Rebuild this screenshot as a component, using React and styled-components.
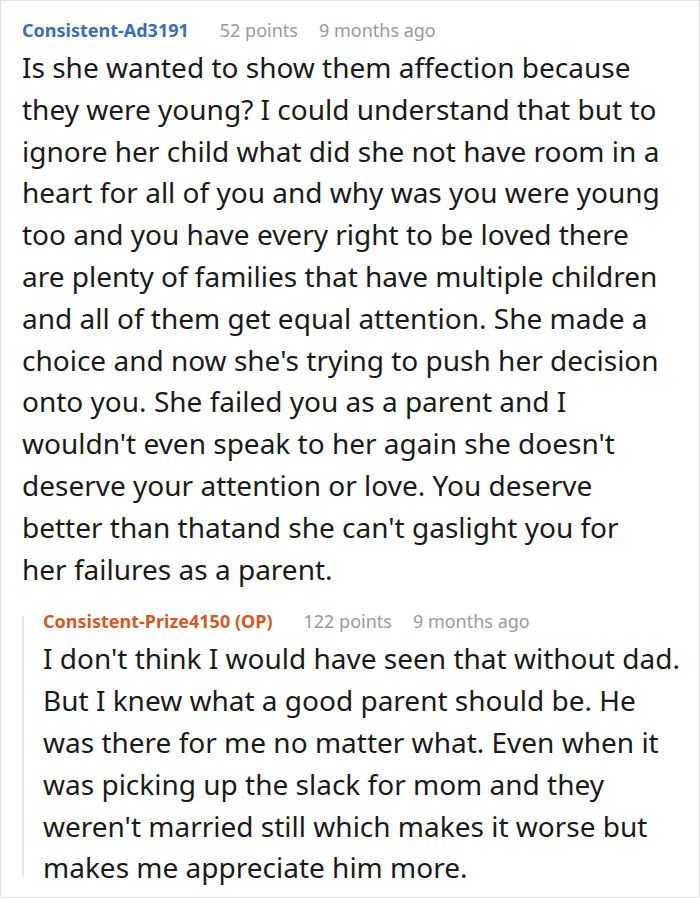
import React from 'react'
import styled, { createGlobalStyle } from 'styled-components'

const Global = createGlobalStyle`
  html, body { margin: 0; padding: 0; background: #fff; }
  body { font-family: "Noto Sans", "Open Sans", sans-serif; }
`

const Card = styled.section`
  box-sizing: border-box;
  width: 700px;
  height: 898px;
  border: 1px solid #e2e2e2;
  padding: 17px 14px 0 21px;
  overflow: hidden;
`

const Meta = styled.div`
  display: flex;
  align-items: baseline;
  font-size: 18px;
  line-height: 24px;
  color: #9a9a9a;
  white-space: nowrap;
`

const Author = styled.span`
  font-weight: 700;
  color: ${p => (p.$op ? '#d45a24' : '#3a6db5')};
  margin-right: 31px;
`

const Points = styled.span`
  margin-right: 21px;
`

const Body = styled.p`
  margin: 5px ${p => p.$inset}px 0 0;
  font-size: 28px;
  line-height: 41.8px;
  color: #1a1a1a;
`

// thin grey thread line on the left of a reply
const Reply = styled.div`
  margin-top: 19px;
  padding: 0 0 0 21px;
  background: linear-gradient(#e8e8e8, #e8e8e8) no-repeat 0 7px / 2px calc(100% - 19px);
`

const Comment = ({ author, points, time, op, inset = 0, children }) => (
  <>
    <Meta>
      <Author $op={op}>{author}</Author>
      <Points>{points} points</Points>
      <span>{time}</span>
    </Meta>
    <Body $inset={inset}>{children}</Body>
  </>
)

export default function App() {
  return (
    <>
      <Global />
      <Card>
        <Comment author="Consistent-Ad3191" points={52} time="9 months ago" inset={24}>
          Is she wanted to show them affection because they were young? I could understand that but to
          ignore her child what did she not have room in a heart for all of you and why was you were young
          too and you have every right to be loved there are plenty of families that have multiple children
          and all of them get equal attention. She made a choice and now she's trying to push her decision
          onto you. She failed you as a parent and I wouldn't even speak to her again she doesn't deserve
          your attention or love. You deserve better than thatand she can't gaslight you for her failures
          as a parent.
        </Comment>
        <Reply>
          <Comment author="Consistent-Prize4150 (OP)" points={122} time="9 months ago" op>
            I don't think I would have seen that without dad. But I knew what a good parent should be. He
            was there for me no matter what. Even when it was picking up the slack for mom and they weren't
            married still which makes it worse but makes me appreciate him more.
          </Comment>
        </Reply>
      </Card>
    </>
  )
}
